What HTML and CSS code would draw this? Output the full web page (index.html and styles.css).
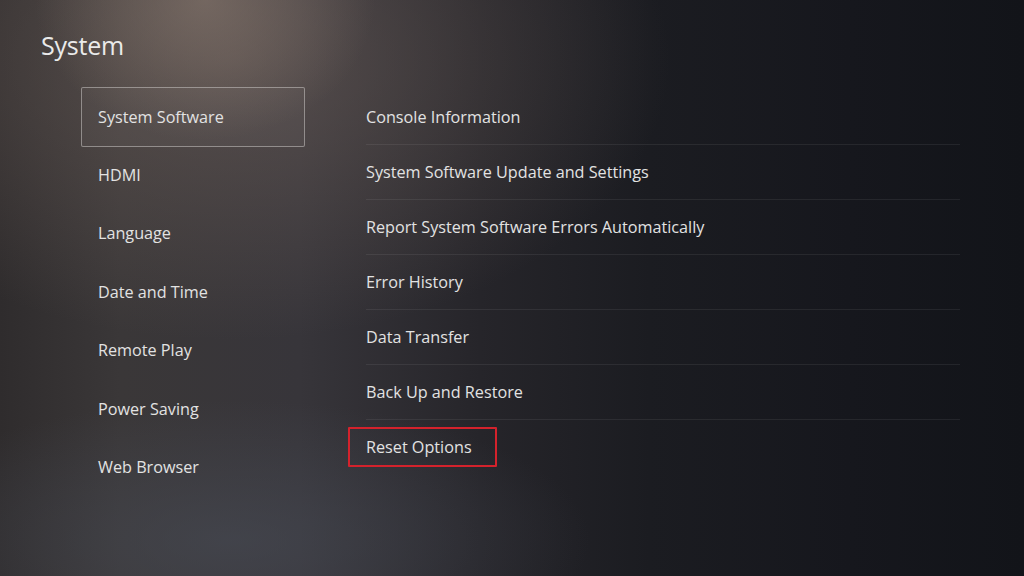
FILE: index.html
```html
<!DOCTYPE html>
<html lang="en">
<head>
<meta charset="utf-8">
<title>System</title>
<link rel="stylesheet" href="styles.css">
</head>
<body>
<div class="screen">
  <h1 class="title">System</h1>
  <div class="main">
    <ul class="nav">
      <li class="nav-item is-selected">System Software</li>
      <li class="nav-item">HDMI</li>
      <li class="nav-item">Language</li>
      <li class="nav-item">Date and Time</li>
      <li class="nav-item">Remote Play</li>
      <li class="nav-item">Power Saving</li>
      <li class="nav-item">Web Browser</li>
    </ul>
    <ul class="options">
      <li class="option">Console Information</li>
      <li class="option">System Software Update and Settings</li>
      <li class="option">Report System Software Errors Automatically</li>
      <li class="option">Error History</li>
      <li class="option">Data Transfer</li>
      <li class="option">Back Up and Restore</li>
      <li class="option option-last"><span class="highlight">Reset Options</span></li>
    </ul>
  </div>
</div>
</body>
</html>
```
FILE: styles.css
```css
html, body {
  margin: 0;
  padding: 0;
  background: #1a1b20;
}

.screen {
  width: 1024px;
  height: 576px;
  overflow: hidden;
  font-family: "Open Sans", "Noto Sans", sans-serif;
  color: #e2e2e2;
  background:
    radial-gradient(ellipse 170px 140px at 205px 0px, rgba(150, 132, 120, 0.5), rgba(150, 132, 120, 0) 100%),
    radial-gradient(ellipse 440px 280px at 230px 60px, rgba(112, 98, 92, 0.55), rgba(112, 98, 92, 0) 100%),
    radial-gradient(ellipse 360px 140px at 230px 540px, rgba(72, 76, 86, 0.6), rgba(72, 76, 86, 0) 100%),
    linear-gradient(90deg, #2f2c2d 0px, #3a3738 120px, #37353a 300px, #26252a 480px, #1b1c21 650px, #16171d 850px, #121419 1024px);
}

.title {
  margin: 0;
  padding: 30px 0 0 41px;
  height: 49px;
  font-size: 25px;
  font-weight: 400;
  line-height: 30px;
  color: #eaeaea;
  letter-spacing: -0.2px;
}

.main {
  display: flex;
  padding-top: 7.5px;
}

.nav {
  list-style: none;
  margin: 0 0 0 81px;
  padding: 0;
  width: 224px;
}

.nav-item {
  box-sizing: border-box;
  height: 58.5px;
  display: flex;
  align-items: center;
  padding-left: 16px;
  font-size: 16.2px;
  border: 1px solid transparent;
  border-radius: 2px;
}

.nav-item.is-selected {
  border-color: rgba(200, 196, 194, 0.55);
  background: rgba(255, 255, 255, 0.03);
  height: 60px;
}

.nav-item:nth-child(2) {
  height: 57.5px;
}

.options {
  list-style: none;
  margin: 0 0 0 43px;
  padding: 0;
  width: 612px;
}

.option {
  box-sizing: border-box;
  height: 55px;
  margin-left: 18px;
  display: flex;
  align-items: center;
  font-size: 16.2px;
  border-bottom: 1px solid rgba(255, 255, 255, 0.07);
}

.option:first-child {
  margin-top: 3px;
}

.option-last {
  border-bottom: none;
  margin-left: 0;
}

.highlight {
  box-sizing: border-box;
  display: flex;
  align-items: center;
  height: 40px;
  padding: 0 23px 0 16px;
  border: 2px solid #d4222c;
  border-radius: 1px;
}
```
